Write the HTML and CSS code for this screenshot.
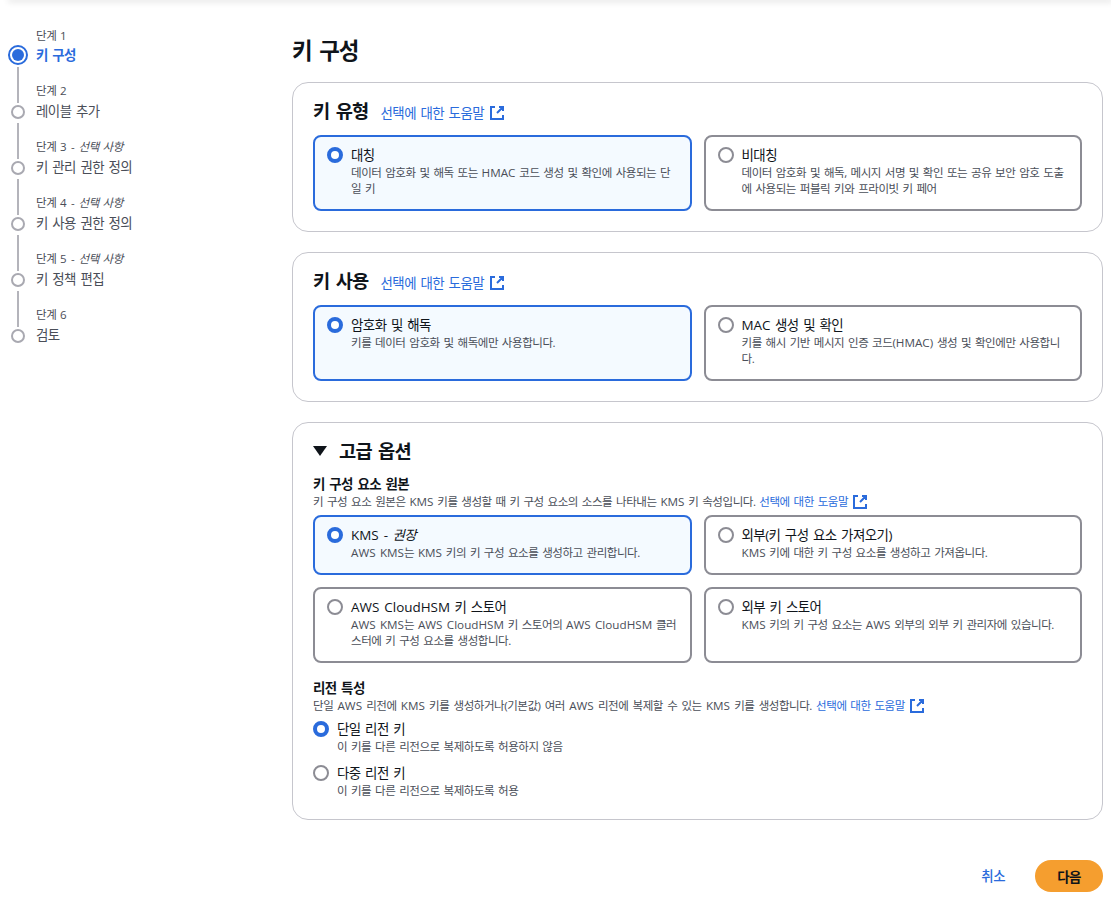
FILE: index.html
```html
<!DOCTYPE html>
<html lang="ko">
<head>
<meta charset="utf-8">
<title>키 구성</title>
<link rel="stylesheet" href="styles.css">
</head>
<body>
<div class="topbar"></div>
<div class="layout">
  <nav class="steps">
    <div class="step step-first active"><div class="rail"><span class="dot"></span></div><div class="step-text"><span class="step-label">단계 <span class="en">1</span></span><span class="step-title">키 구성</span></div></div>
    <div class="step"><div class="rail"><span class="line"></span><span class="dot"></span></div><div class="step-text"><span class="step-label">단계 <span class="en">2</span></span><span class="step-title">레이블 추가</span></div></div>
    <div class="step"><div class="rail"><span class="line"></span><span class="dot"></span></div><div class="step-text"><span class="step-label">단계 <span class="en">3 -</span> <i>선택 사항</i></span><span class="step-title">키 관리 권한 정의</span></div></div>
    <div class="step"><div class="rail"><span class="line"></span><span class="dot"></span></div><div class="step-text"><span class="step-label">단계 <span class="en">4 -</span> <i>선택 사항</i></span><span class="step-title">키 사용 권한 정의</span></div></div>
    <div class="step"><div class="rail"><span class="line"></span><span class="dot"></span></div><div class="step-text"><span class="step-label">단계 <span class="en">5 -</span> <i>선택 사항</i></span><span class="step-title">키 정책 편집</span></div></div>
    <div class="step"><div class="rail"><span class="line"></span><span class="dot"></span></div><div class="step-text"><span class="step-label">단계 <span class="en">6</span></span><span class="step-title">검토</span></div></div>
  </nav>
  <main class="main">
    <h1 class="page-title">키 구성</h1>

    <section class="card">
      <div class="card-head"><h2 class="card-title">키 유형</h2><a class="link">선택에 대한 도움말<svg class="ext" viewBox="1 1 14 14"><path d="M10 2H14V6M14 2 8 8M6 2H2V14H14V10"/></svg></a></div>
      <div class="tiles">
        <div class="tile selected"><span class="radio"></span><div><div class="tile-title">대칭</div><div class="desc">데이터 암호화 및 해독 또는 <span class="en">HMAC</span> 코드 생성 및 확인에 사용되는 단일 키</div></div></div>
        <div class="tile"><span class="radio"></span><div><div class="tile-title">비대칭</div><div class="desc">데이터 암호화 및 해독, 메시지 서명 및 확인 또는 공유 보안 암호 도출에 사용되는 퍼블릭 키와 프라이빗 키 페어</div></div></div>
      </div>
    </section>

    <section class="card">
      <div class="card-head"><h2 class="card-title">키 사용</h2><a class="link">선택에 대한 도움말<svg class="ext" viewBox="1 1 14 14"><path d="M10 2H14V6M14 2 8 8M6 2H2V14H14V10"/></svg></a></div>
      <div class="tiles">
        <div class="tile selected"><span class="radio"></span><div><div class="tile-title">암호화 및 해독</div><div class="desc">키를 데이터 암호화 및 해독에만 사용합니다.</div></div></div>
        <div class="tile"><span class="radio"></span><div><div class="tile-title"><span class="en">MAC</span> 생성 및 확인</div><div class="desc">키를 해시 기반 메시지 인증 코드<span class="en">(HMAC)</span> 생성 및 확인에만 사용합니다.</div></div></div>
      </div>
    </section>

    <section class="card card-adv">
      <h2 class="card-title adv-title"><svg class="caret" viewBox="0 0 14 10"><path d="M0 0H14L7 10Z"/></svg>고급 옵션</h2>
      <div class="field-label">키 구성 요소 원본</div>
      <div class="desc field-desc">키 구성 요소 원본은 <span class="en">KMS</span> 키를 생성할 때 키 구성 요소의 소스를 나타내는 <span class="en">KMS</span> 키 속성입니다. <a class="link link-small">선택에 대한 도움말<svg class="ext" viewBox="1 1 14 14"><path d="M10 2H14V6M14 2 8 8M6 2H2V14H14V10"/></svg></a></div>
      <div class="tiles tiles-adv">
        <div class="tile selected"><span class="radio"></span><div><div class="tile-title"><span class="en">KMS -</span> <i>권장</i></div><div class="desc"><span class="en">AWS KMS</span>는 <span class="en">KMS</span> 키의 키 구성 요소를 생성하고 관리합니다.</div></div></div>
        <div class="tile"><span class="radio"></span><div><div class="tile-title">외부(키 구성 요소 가져오기)</div><div class="desc"><span class="en">KMS</span> 키에 대한 키 구성 요소를 생성하고 가져옵니다.</div></div></div>
        <div class="tile"><span class="radio"></span><div><div class="tile-title"><span class="en">AWS CloudHSM</span> 키 스토어</div><div class="desc"><span class="en">AWS KMS</span>는 <span class="en">AWS CloudHSM</span> 키 스토어의 <span class="en">AWS CloudHSM</span> 클러스터에 키 구성 요소를 생성합니다.</div></div></div>
        <div class="tile"><span class="radio"></span><div><div class="tile-title">외부 키 스토어</div><div class="desc"><span class="en">KMS</span> 키의 키 구성 요소는 <span class="en">AWS</span> 외부의 외부 키 관리자에 있습니다.</div></div></div>
      </div>
      <div class="field-label region-label">리전 특성</div>
      <div class="desc field-desc region-desc">단일 <span class="en">AWS</span> 리전에 <span class="en">KMS</span> 키를 생성하거나(기본값) 여러 <span class="en">AWS</span> 리전에 복제할 수 있는 <span class="en">KMS</span> 키를 생성합니다. <a class="link link-small">선택에 대한 도움말<svg class="ext" viewBox="1 1 14 14"><path d="M10 2H14V6M14 2 8 8M6 2H2V14H14V10"/></svg></a></div>
      <div class="options">
        <div class="option selected"><span class="radio"></span><div><div class="tile-title">단일 리전 키</div><div class="desc">이 키를 다른 리전으로 복제하도록 허용하지 않음</div></div></div>
        <div class="option"><span class="radio"></span><div><div class="tile-title">다중 리전 키</div><div class="desc">이 키를 다른 리전으로 복제하도록 허용</div></div></div>
      </div>
    </section>

    <div class="actions"><a class="link link-cancel">취소</a><button class="btn-next">다음</button></div>
  </main>
</div>
</body>
</html>
```
FILE: styles.css
```css
* { box-sizing: border-box; letter-spacing: -0.04em; word-spacing: 0.1125em; }
html, body { margin: 0; padding: 0; }
body {
  background: #fff;
  color: #0f141a;
  font-family: "Open Sans", "Noto Sans CJK KR", sans-serif;
  font-size: 13.44px;
  line-height: 20px;
  height: 908px;
  overflow: hidden;
}
.en { letter-spacing: 0; }
.desc .en { font-size: 11.68px; }
.topbar { height: 0; margin-left: 10px; box-shadow: 0 0 6px 2px rgba(0,0,0,.12); }
.layout { display: flex; align-items: flex-start; }

.steps { width: 292px; flex: none; padding: 24px 0 0 8px; }
.step { display: flex; height: 56px; padding: 2px 0; }
.step-first { height: 41px; padding: 0; }
.rail { width: 20px; flex: none; display: flex; flex-direction: column; align-items: center; justify-content: flex-end; gap: 2px; }
.line { flex: 1; width: 2px; background: #b4b4bb; }
.dot { width: 14px; height: 14px; border: 2px solid #a9a9b1; border-radius: 50%; background: #fff; flex: none; }
.active .dot { width: 20px; height: 20px; border-color: #2a6bdc; position: relative; }
.active .dot::after { content: ""; position: absolute; inset: 2px; border-radius: 50%; background: #2a6bdc; }
.step-text { margin-left: 8px; flex: 1; display: flex; flex-direction: column; justify-content: flex-end; }
.step-label { font-size: 11.52px; line-height: 16px; color: #4a4e58; margin-bottom: 2px; }
.step-title { font-size: 13.44px; line-height: 20px; color: #4a4e58; margin-bottom: -2px; }
.active .step-title { color: #2a6bdc; font-weight: 700; margin-bottom: 0; }
.active .step-label { margin-bottom: 1px; }

.main { flex: 1; padding: 0 8px 0 0; min-width: 0; }
.page-title { margin: 36px 0 16px; font-size: 22.4px; line-height: 30px; font-weight: 700; }

.card { border: 1px solid #c6c6cd; border-radius: 16px; padding: 16px 20px 20px; margin-bottom: 20px; }
.card-head { display: flex; align-items: baseline; gap: 12px; margin-bottom: 12px; }
.card-title { margin: 0; font-size: 18.7px; line-height: 24px; font-weight: 700; }
.link { color: #2a6bdc; font-size: 13.44px; display: inline-flex; align-items: center; gap: 6px; }
.ext { width: 14px; height: 14px; fill: none; stroke: currentColor; stroke-width: 2; align-self: center; }

.tiles { display: grid; grid-template-columns: 1fr 1fr; gap: 12px; }
.tile { display: flex; gap: 8px; border: 2px solid #8c8c94; border-radius: 8px; padding: 8px 12px 12px; }
.tile.selected { border-color: #2a6bdc; background: #f4faff; }
.radio { width: 16px; height: 16px; border-radius: 50%; border: 2px solid #8c8c94; background: #fff; flex: none; margin-top: 2px; }
.selected > .radio { border: 4px solid #2a6bdc; }
.tile-title { font-size: 13.44px; line-height: 20px; }
.desc { font-size: 11.52px; line-height: 16px; color: #4a4e58; }

.adv-title { display: flex; align-items: center; gap: 12px; margin-bottom: 12px; }
.caret { width: 14px; height: 10px; fill: #0f141a; }
.field-label { font-size: 13.44px; line-height: 19px; font-weight: 700; }
.field-desc { margin-bottom: 5px; }
.region-desc { word-spacing: 0.145em; }
.link-small { font-size: 11.52px; gap: 5px; }
.tiles-adv { margin-bottom: 16px; }
.options { display: flex; flex-direction: column; gap: 8px; margin-top: 4px; }
.option { display: flex; gap: 8px; }

.actions { display: flex; justify-content: flex-end; align-items: center; gap: 30px; margin-top: 40px; }
.link-cancel { font-weight: 500; }
.btn-next { width: 68px; height: 32px; border: 0; border-radius: 16px; background: #f59e2f; color: #0f141a; font: 700 13.44px "Open Sans", "Noto Sans CJK KR", sans-serif; }
```
